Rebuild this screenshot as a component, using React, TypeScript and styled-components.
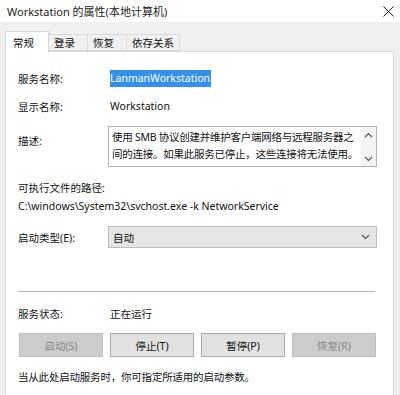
import React from "react";
import styled, { createGlobalStyle } from "styled-components";

const Global = createGlobalStyle`
  html, body { margin: 0; padding: 0; background: #ffffff; }
  body { font-family: "Noto Sans", "Noto Sans CJK SC", sans-serif; }
`;

const FONT = `"Noto Sans", "Noto Sans CJK SC", sans-serif`;

const Window = styled.div`
  width: 400px;
  height: 395px;
  display: flex;
  flex-direction: column;
  overflow: hidden;
  font-family: ${FONT};
  font-size: 10.5px;
  color: #111;
`;

const TitleBar = styled.div`
  height: 22px;
  flex: none;
  background: #ffffff;
  display: flex;
  align-items: center;
  justify-content: space-between;
  padding: 0 5px 0 7px;
  font-size: 11px;
  color: #222;
`;

const CloseBtn = styled.div`
  width: 14px;
  height: 14px;
  display: flex;
  align-items: center;
  justify-content: center;
`;

const Body = styled.div`
  flex: 1;
  background: #f0f0f0;
  padding: 9px 6px 0 5px;
  display: flex;
  flex-direction: column;
`;

const TabStrip = styled.div`
  display: flex;
  align-items: flex-end;
  height: 20px;
  position: relative;
  z-index: 1;
`;

const Tab = styled.div<{ $active?: boolean }>`
  height: ${(p) => (p.$active ? "21px" : "17px")};
  margin-bottom: ${(p) => (p.$active ? "-1px" : "0")};
  padding: 0 ${(p) => (p.$active ? "7px" : "5px")};
  background: ${(p) => (p.$active ? "#ffffff" : "#f0f0f0")};
  border: 1px solid #d9d9d9;
  border-bottom: ${(p) => (p.$active ? "none" : "1px solid #d9d9d9")};
  border-left-width: ${(p) => (p.$active ? "1px" : "0")};
  display: flex;
  align-items: center;
  font-size: 10.5px;
  color: #111;
  box-sizing: border-box;
  min-width: ${(p) => (p.$active ? "44px" : "39px")};
`;

const Panel = styled.div`
  flex: 1;
  background: #ffffff;
  border: 1px solid #d9d9d9;
  border-bottom: none;
  padding: 15px 0 0 12px;
  display: flex;
  flex-direction: column;
`;

const Row = styled.div<{ $h?: number; $mt?: number; $top?: boolean }>`
  display: flex;
  align-items: ${(p) => (p.$top ? "flex-start" : "center")};
  height: ${(p) => (p.$h ? `${p.$h}px` : "auto")};
  margin-top: ${(p) => p.$mt ?? 0}px;
`;

const Label = styled.div<{ $pt?: number }>`
  width: 92px;
  flex: none;
  padding-top: ${(p) => p.$pt ?? 0}px;
`;

const Value = styled.div`
  white-space: nowrap;
`;

const Selected = styled.span`
  background: #3390ee;
  color: #ffffff;
  padding: 1px 1px 2px 0;
`;

const TextArea = styled.div`
  margin-left: -2px;
  width: 269px;
  height: 41px;
  flex: none;
  box-sizing: border-box;
  border: 1px solid #b4b4b4;
  display: flex;
  background: #fff;
  overflow: hidden;
`;

const TextAreaText = styled.div`
  flex: 1;
  padding: 2px 0 0 3px;
  line-height: 17px;
  font-size: 10.5px;
  letter-spacing: -0.25px;
  white-space: nowrap;
  overflow: hidden;
`;

const ScrollBar = styled.div`
  width: 15px;
  flex: none;
  background: #f3f3f3;
  display: flex;
  flex-direction: column;
  justify-content: space-between;
  align-items: center;
  padding: 5px 0 4px;
`;

const Text = styled.div<{ $mt?: number }>`
  line-height: 16px;
  margin-top: ${(p) => p.$mt ?? 0}px;
  white-space: nowrap;
`;

const Select = styled.div`
  margin-left: -2px;
  width: 269px;
  height: 22px;
  box-sizing: border-box;
  background: #e5e5e5;
  border: 1px solid #bdbdbd;
  display: flex;
  align-items: center;
  justify-content: space-between;
  padding: 0 6px 0 4px;
`;

const Separator = styled.div`
  margin-top: 43px;
  width: 357px;
  height: 1px;
  background: #b8b8b8;
`;

const ButtonRow = styled.div`
  display: flex;
  gap: 7px;
  margin-top: 9px;
  margin-left: 1px;
`;

const Button = styled.div<{ $disabled?: boolean }>`
  width: 84px;
  height: 24px;
  box-sizing: border-box;
  display: flex;
  align-items: center;
  justify-content: center;
  background: ${(p) => (p.$disabled ? "#cccccc" : "#e1e1e1")};
  border: 1px solid ${(p) => (p.$disabled ? "#bfbfbf" : "#adadad")};
  color: ${(p) => (p.$disabled ? "#8a8a8a" : "#111")};
`;

const Footer = styled.div`
  line-height: 16px;
  margin-top: 12px;
  white-space: nowrap;
  letter-spacing: -0.2px;
`;

const Chevron = ({ up }: { up?: boolean }) => (
  <svg width="9" height="6" viewBox="0 0 9 6">
    <path
      d={up ? "M1 5 L4.5 1.5 L8 5" : "M1 1 L4.5 4.5 L8 1"}
      fill="none"
      stroke="#555"
      strokeWidth="1.1"
    />
  </svg>
);

export default function App() {
  return (
    <>
      <Global />
      <Window>
        <TitleBar>
          <span>Workstation 的属性(本地计算机)</span>
          <CloseBtn>
            <svg width="11" height="11" viewBox="0 0 11 11">
              <path d="M0.5 0.5 L10.5 10.5 M10.5 0.5 L0.5 10.5" stroke="#222" strokeWidth="1" />
            </svg>
          </CloseBtn>
        </TitleBar>
        <Body>
          <TabStrip>
            <Tab $active>常规</Tab>
            <Tab>登录</Tab>
            <Tab>恢复</Tab>
            <Tab>依存关系</Tab>
          </TabStrip>
          <Panel>
            <Row $h={22}>
              <Label>服务名称:</Label>
              <Value>
                <Selected>LanmanWorkstation</Selected>
              </Value>
            </Row>
            <Row $h={22} $mt={6}>
              <Label>显示名称:</Label>
              <Value>Workstation</Value>
            </Row>
            <Row $top $mt={9}>
              <Label $pt={7}>描述:</Label>
              <TextArea>
                <TextAreaText>
                  使用 SMB 协议创建并维护客户端网络与远程服务器之
                  <br />
                  间的连接。如果此服务已停止，这些连接将无法使用。
                </TextAreaText>
                <ScrollBar>
                  <Chevron up />
                  <Chevron />
                </ScrollBar>
              </TextArea>
            </Row>
            <Text $mt={13}>可执行文件的路径:</Text>
            <Text $mt={2}>C:\windows\System32\svchost.exe -k NetworkService</Text>
            <Row $h={22} $mt={12}>
              <Label>启动类型(E):</Label>
              <Select>
                <span>自动</span>
                <Chevron />
              </Select>
            </Row>
            <Separator />
            <Row $h={22} $mt={10}>
              <Label>服务状态:</Label>
              <Value>正在运行</Value>
            </Row>
            <ButtonRow>
              <Button $disabled>启动(S)</Button>
              <Button>停止(T)</Button>
              <Button>暂停(P)</Button>
              <Button $disabled>恢复(R)</Button>
            </ButtonRow>
            <Footer>当从此处启动服务时，你可指定所适用的启动参数。</Footer>
          </Panel>
        </Body>
      </Window>
    </>
  );
}
